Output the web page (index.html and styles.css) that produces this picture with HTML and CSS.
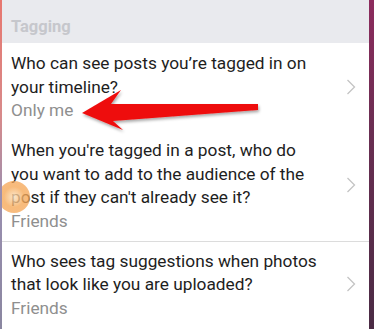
FILE: index.html
```html
<!DOCTYPE html>
<html>
<head>
<meta charset="utf-8">
<link rel="stylesheet" href="styles.css">
</head>
<body>
<div class="frame">
  <div class="edge-left"></div>
  <main class="panel">
    <div class="section-head">Tagging</div>
    <div class="row">
      <div class="texts">
        <div class="title">Who can see posts you’re tagged in on your timeline?</div>
        <div class="value">Only me</div>
      </div>
      <svg class="chev" width="10" height="16" viewBox="0 0 10 16"><path d="M1.5 1 L8.5 8 L1.5 15" fill="none" stroke="#c4c4c4" stroke-width="1.3"/></svg>
    </div>
    <div class="row">
      <div class="texts">
        <div class="title">When you're tagged in a post, who do you want to add to the audience of the post if they can't already see it?</div>
        <div class="value">Friends</div>
      </div>
      <svg class="chev" width="10" height="16" viewBox="0 0 10 16"><path d="M1.5 1 L8.5 8 L1.5 15" fill="none" stroke="#c4c4c4" stroke-width="1.3"/></svg>
    </div>
    <div class="row divided">
      <div class="texts">
        <div class="title">Who sees tag suggestions when photos that look like you are uploaded?</div>
        <div class="value">Friends</div>
      </div>
      <svg class="chev" width="10" height="16" viewBox="0 0 10 16"><path d="M1.5 1 L8.5 8 L1.5 15" fill="none" stroke="#c4c4c4" stroke-width="1.3"/></svg>
    </div>
    <svg class="arrow" width="374" height="329" viewBox="0 0 374 329">
      <defs>
        <filter id="sh" x="-10%" y="-30%" width="120%" height="160%">
          <feDropShadow dx="1" dy="2" stdDeviation="1.5" flood-color="#000" flood-opacity="0.35"/>
        </filter>
      </defs>
      <polygon points="82,113 121,90 111,104 258,104 258,110 113,121 123,130" fill="#ee0f0f" filter="url(#sh)"/>
    </svg>
    <div class="touch"></div>
  </main>
  <div class="edge-right"></div>
</div>
</body>
</html>
```
FILE: styles.css
```css
html, body {
  margin: 0;
  padding: 0;
}
body {
  width: 374px;
  height: 329px;
  overflow: hidden;
  font-family: Roboto, "Noto Sans", sans-serif;
}
.frame {
  display: flex;
  height: 329px;
}
.edge-left {
  width: 2px;
  flex: none;
  background: linear-gradient(to bottom, #e7776f 0%, #d88a8a 35%, #9a8fb0 60%, #8a86a0 100%);
}
.edge-right {
  width: 5px;
  flex: none;
  background: linear-gradient(to bottom, #8d2b5d 0%, #6a2e52 40%, #4a2b44 100%);
}
.panel {
  flex: 1;
  background: #fff;
  position: relative;
  overflow: hidden;
}
.section-head {
  height: 43px;
  box-sizing: border-box;
  padding: 17px 0 0 9px;
  background: #e9eaee;
  color: #c6c7cc;
  font-weight: bold;
  font-size: 16.5px;
  line-height: 20px;
}
.row {
  display: flex;
  align-items: center;
  padding: 9px 0 9px 9px;
}
.row.divided {
  border-top: 1px solid #dcdcdc;
  padding-top: 8px;
}
.texts {
  flex: 1;
}
.title {
  width: 314px;
  font-size: 17.3px;
  line-height: 23.5px;
  color: #1e1e1e;
}
.value {
  font-size: 17.3px;
  line-height: 22px;
  color: #8f8f8f;
}
.chev {
  flex: none;
  margin: 0 13px 0 0;
}
.arrow {
  position: absolute;
  left: -2px;
  top: 0;
  pointer-events: none;
}
.touch {
  position: absolute;
  left: -4px;
  top: 181px;
  width: 32px;
  height: 32px;
  border-radius: 50%;
  background: radial-gradient(circle, rgba(250,225,190,0.8) 0%, rgba(246,170,90,0.8) 45%, rgba(244,160,80,0.7) 100%);
}
```
